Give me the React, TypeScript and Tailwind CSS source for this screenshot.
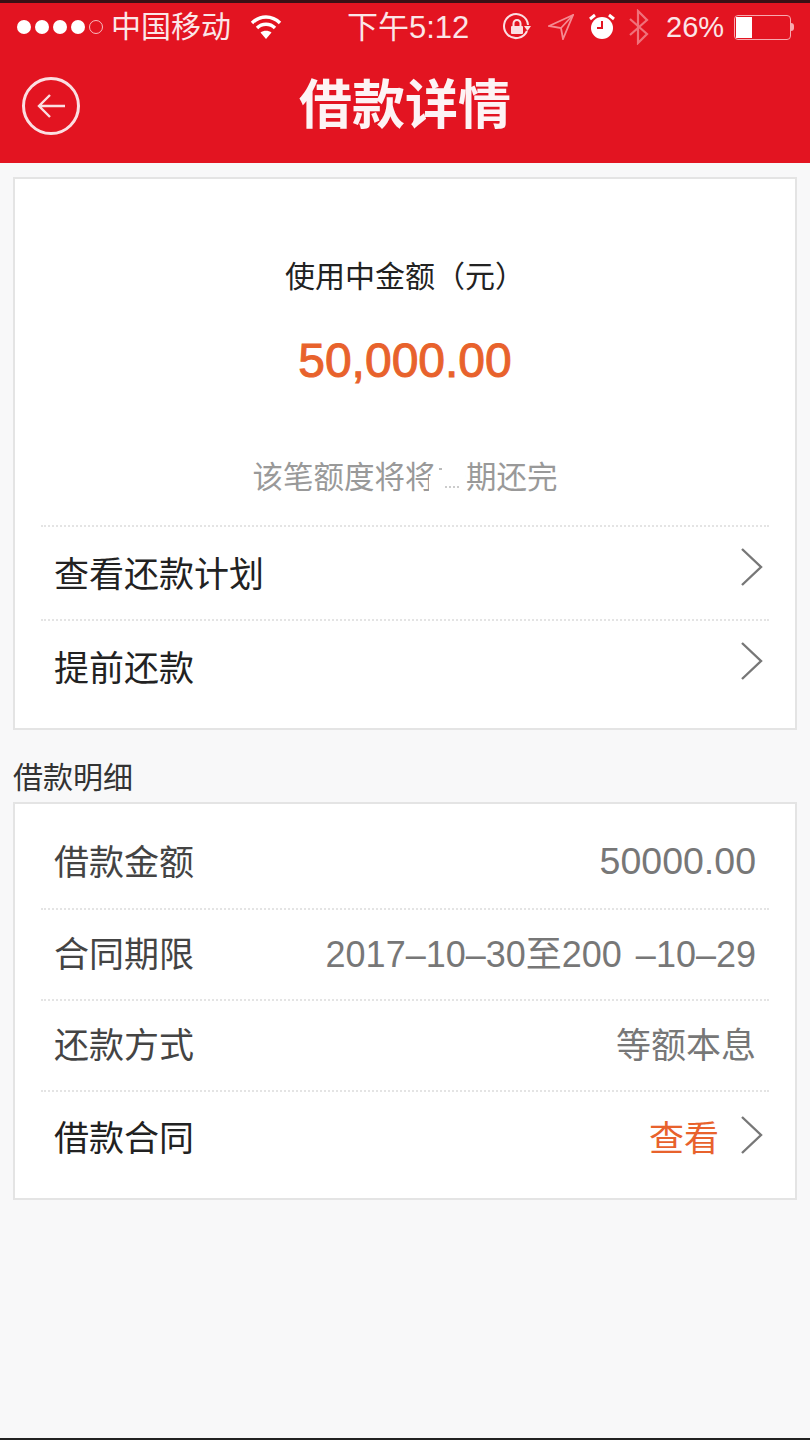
import React from 'react';

const Chevron = () => (
  <svg width="24" height="40" viewBox="0 0 24 40" fill="none" stroke="#777" strokeWidth="2.4">
    <path d="M2 2 L21 20 L2 38" />
  </svg>
);

const Divider = () => (
  <div className="mx-[26px] border-t-2 border-dotted border-[#e4e4e4]" />
);

const StatusBar = () => (
  <div className="flex h-[48px] items-center pl-[17px] text-white">
    <div className="flex items-center gap-[4px]">
      <span className="h-[14px] w-[14px] rounded-full bg-white" />
      <span className="h-[14px] w-[14px] rounded-full bg-white" />
      <span className="h-[14px] w-[14px] rounded-full bg-white" />
      <span className="h-[14px] w-[14px] rounded-full bg-white" />
      <span className="h-[14px] w-[14px] rounded-full border border-white/70" />
    </div>
    <span className="ml-[8px] w-[122px] text-[30px] leading-none text-[#fbe6e8]">中国移动</span>
    <svg className="ml-[17px]" width="32" height="26" viewBox="0 0 32 26" fill="none" stroke="#fff" strokeWidth="3.4">
      <path d="M2 9 C10 1 22 1 30 9" />
      <path d="M7 14 C12 9 20 9 25 14" />
      <path d="M16 25 L10.5 18.5 C13.5 16 18.5 16 21.5 18.5 Z" fill="#fff" stroke="none" />
    </svg>
    <span className="ml-[65px] w-[124px] whitespace-nowrap text-[31px] leading-none text-[#fbe6e8]">下午5:12</span>
    <svg className="ml-[31px]" width="30" height="30" viewBox="0 0 30 30" fill="none" stroke="#fbdfe2" strokeWidth="2">
      <path d="M25 19 A12 12 0 1 1 26 13" />
      <path d="M22 14 L29 14 L25.500 19 Z" fill="#fbdfe2" stroke="none" />
      <path d="M11.500 14 V11.500 A3.500 3.500 0 0 1 18.500 11.500 V14" />
      <rect x="9" y="14" width="12" height="8" rx="1" fill="#fbdfe2" stroke="none" />
    </svg>
    <svg className="ml-[16px]" width="26" height="26" viewBox="0 0 26 26" fill="none" stroke="#f58a92" strokeWidth="1.800">
      <path d="M25 1 L1 12 L13 14 L15 25 Z" />
      <path d="M25 1 L13 14" />
    </svg>
    <svg className="ml-[15px]" width="26" height="28" viewBox="0 0 26 28">
      <circle cx="13" cy="15" r="11" fill="#fff" />
      <path d="M13 8 V15 H8" fill="none" stroke="#e31421" strokeWidth="2" />
      <path d="M1 6 L6 2 M25 6 L20 2" stroke="#fff" strokeWidth="3" />
    </svg>
    <svg className="ml-[13px]" width="22" height="36" viewBox="0 0 22 36" fill="none" stroke="#f0717a" strokeWidth="2.200">
      <path d="M2 10 L19 25 L10 34 V2 L19 11 L2 26" />
    </svg>
    <span className="ml-[16px] w-[60px] text-[29px] leading-none text-[#fbe6e8]">26%</span>
    <div className="ml-[8px] flex items-center">
      <div className="h-[25px] w-[57px] rounded-[4px] border border-[#f8a9af] p-px">
        <div className="h-full w-[16px] bg-white" />
      </div>
      <div className="h-[8px] w-[3px] rounded-r bg-[#f8a9af]" />
    </div>
  </div>
);

const LinkRow = ({ label }: { label: string }) => (
  <div className="flex h-[92px] items-center justify-between pt-[2px] pl-[39px] pr-[31px]">
    <span className="text-[35px] leading-none text-[#222]">{label}</span>
    <div className="mt-[-14px]">
      <Chevron />
    </div>
  </div>
);

export default function App() {
  return (
    <div className="flex h-[1440px] w-[810px] flex-col overflow-hidden border-b-2 border-[#222] bg-[#f8f8f9] [font-family:'Liberation_Sans','Noto_Sans_CJK_SC',sans-serif]">
      <div className="h-[163px] border-t-[3px] border-[#3a1015] bg-[#e31421]">
        <StatusBar />
        <div className="relative flex h-[112px] items-center justify-center pb-[4px]">
          <div className="absolute left-[22px] top-[26px] flex h-[58px] w-[58px] items-center justify-center rounded-full border-[3px] border-[#fbdfe2]">
            <svg width="30" height="26" viewBox="0 0 30 26" fill="none" stroke="#fbdfe2" strokeWidth="2.400">
              <path d="M14 2 L3 13 L14 24 M3 13 H29" />
            </svg>
          </div>
          <span className="text-[53px] font-bold leading-none text-[#fdf3f4]">借款详情</span>
        </div>
      </div>

      <div className="mx-[13px] mt-[14px] h-[553px] border-2 border-[#e4e4e4] bg-white">
        <div className="flex h-[346px] flex-col items-center">
          <span className="mt-[83px] text-[30px] leading-none text-[#222]">使用中金额（元）</span>
          <span className="mt-[45px] text-[48px] leading-none text-[#e8622c] [-webkit-text-stroke:1px_#e8622c]">50,000.00</span>
          <span className="relative mt-[77px] text-[30.5px] leading-none text-[#999]">
            该笔额度将将于期还完
            <span className="absolute left-[176px] top-[14px] h-[20px] w-[6px] bg-white" />
            <span className="absolute left-[182px] top-[-2px] h-[36px] w-[30px] bg-white" />
            <span className="absolute left-[186px] top-[6px] h-[2px] w-[3px] bg-[#bbb]" />
            <span className="absolute left-[192px] top-[24px] h-[2px] w-[14px] border-t-2 border-dotted border-[#ccc]" />
          </span>
        </div>
        <Divider />
        <LinkRow label="查看还款计划" />
        <Divider />
        <LinkRow label="提前还款" />
      </div>

      <div className="ml-[13px] mt-[33px] text-[30px] leading-none text-[#333]">借款明细</div>

      <div className="mx-[13px] mt-[9px] h-[398px] border-2 border-[#e4e4e4] bg-white">
        <div className="flex h-[104px] items-center justify-between pt-[12px] pl-[39px] pr-[39px]">
          <span className="text-[35px] leading-none text-[#444]">借款金额</span>
          <span className="text-[37.5px] leading-none text-[#777]">50000.00</span>
        </div>
        <Divider />
        <div className="flex h-[89px] items-center justify-between pl-[39px] pr-[39px]">
          <span className="text-[35px] leading-none text-[#444]">合同期限</span>
          <span className="text-[36px] leading-none text-[#777] [word-spacing:4px]">2017–10–30至200 –10–29</span>
        </div>
        <Divider />
        <div className="flex h-[89px] items-center justify-between pl-[39px] pr-[39px]">
          <span className="text-[35px] leading-none text-[#444]">还款方式</span>
          <span className="text-[35px] leading-none text-[#777]">等额本息</span>
        </div>
        <Divider />
        <div className="flex h-[92px] items-center justify-between pl-[39px] pr-[31px]">
          <span className="text-[35px] leading-none text-[#222]">借款合同</span>
          <div className="flex items-center gap-[21px]">
            <span className="text-[35px] leading-none text-[#e8622c]">查看</span>
            <div className="mt-[-6px]">
              <Chevron />
            </div>
          </div>
        </div>
      </div>
    </div>
  );
}
